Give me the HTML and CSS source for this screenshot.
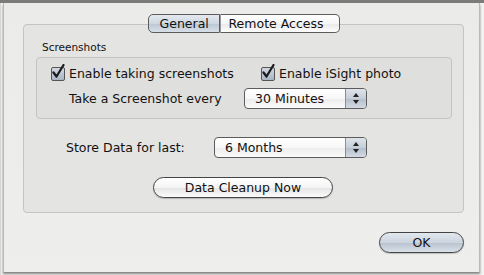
FILE: index.html
```html
<!DOCTYPE html>
<html lang="en">
<head>
  <meta charset="UTF-8">
  <title>Preferences</title>
  <link rel="stylesheet" href="styles.css">
</head>
<body>
<div class="window">
  <div class="sheet">
    <div class="tabs">
      <span class="tab active">General</span>
      <span class="tab">Remote Access</span>
    </div>

    <div class="tab-box">
      <div class="group-title">Screenshots</div>
      <div class="group">
        <div class="row checks">
          <label class="check first">
            <span class="box"><svg width="14" height="16" viewBox="0 0 14 16"><path d="M2.5 8.5 L5.5 12.5 L12.5 1" fill="none" stroke="#1a1a1a" stroke-width="2.2" stroke-linecap="round" stroke-linejoin="round"/></svg></span>
            Enable taking screenshots
          </label>
          <label class="check">
            <span class="box"><svg width="14" height="16" viewBox="0 0 14 16"><path d="M2.5 8.5 L5.5 12.5 L12.5 1" fill="none" stroke="#1a1a1a" stroke-width="2.2" stroke-linecap="round" stroke-linejoin="round"/></svg></span>
            Enable iSight photo
          </label>
        </div>
        <div class="row every">
          <span class="every-label">Take a Screenshot every</span>
          <div class="popup short">
            <span class="popup-value">30 Minutes</span>
            <span class="popup-arrows"><i class="up"></i><i class="down"></i></span>
          </div>
        </div>
      </div>

      <div class="row store">
        <span class="store-label">Store Data for last:</span>
        <div class="popup long">
          <span class="popup-value">6 Months</span>
          <span class="popup-arrows"><i class="up"></i><i class="down"></i></span>
        </div>
      </div>

      <div class="row cleanup">
        <button class="button wide">Data Cleanup Now</button>
      </div>
    </div>

    <div class="footer">
      <button class="button default">OK</button>
    </div>
  </div>
</div>
</body>
</html>
```

FILE: styles.css
```css
:root {
  --sheet-bg: #ececea;
  --box-bg: #e4e4e2;
  --group-bg: #dfdfdd;
  --box-border: #c4c4c2;
  --text-dark: #111111;
  --control-border: #5c5c5c;
}

* {
  box-sizing: border-box;
  margin: 0;
  padding: 0;
}

body {
  width: 484px;
  height: 275px;
  overflow: hidden;
  font-family: 'DejaVu Sans', sans-serif;
  font-size: 12.5px;
  color: var(--text-dark);
  background: #f3f3f1;
}

.window {
  height: 275px;
  border-top: 3px solid #7b7b7b;
  padding: 0 4px 0 3px;
  background: linear-gradient(to right, #d6d6d6 0, #d6d6d6 1px, #f2f2f0 1px);
}

.sheet {
  height: 269px;
  background: linear-gradient(#ebebe9, #eeeeec);
  border-left: 1px solid #b9b9b7;
  border-right: 1px solid #b9b9b7;
  box-shadow: 0 2px 2px rgba(0, 0, 0, 0.45);
  padding: 11px 15px 0 19px;
}

/* tabs */
.tabs {
  display: flex;
  justify-content: center;
  margin: 0 0 -9px 0;
  position: relative;
  z-index: 1;
}

.tab {
  height: 19px;
  line-height: 17px;
  font-size: 12.5px;
  padding: 0 10px;
  border: 1px solid var(--control-border);
  background: linear-gradient(#ffffff, #f6f6f6 50%, #e9e9e9 51%, #fdfdfd);
}

.tab:first-child {
  border-radius: 5px 0 0 5px;
  width: 72px;
  padding: 0 0 0 11px;
}

.tab + .tab {
  border-left: 1px solid #9a9a9a;
  border-radius: 0 5px 5px 0;
  width: 120px;
  padding-left: 8px;
}

.tab.active {
  background: linear-gradient(#e4e9ef, #cfd7e1 50%, #bcc6d3 51%, #d8dfe8);
}

/* main box */
.tab-box {
  height: 189px;
  background: var(--box-bg);
  border: 1px solid var(--box-border);
  border-radius: 4px;
  padding: 15px 11px 0 12px;
}

.group-title {
  font-size: 10.5px;
  padding-left: 6px;
  line-height: 14px;
  margin-bottom: 3px;
}

.group {
  height: 62px;
  background: var(--group-bg);
  border: 1px solid var(--box-border);
  border-radius: 4px;
  padding: 8px 0 0 14px;
}

.row {
  display: flex;
  align-items: center;
}

.check {
  display: flex;
  align-items: center;
  gap: 4px;
  height: 15px;
}

.check.first {
  width: 210px;
}

.box {
  width: 14px;
  height: 14px;
  border: 1px solid #555;
  border-radius: 2px;
  background: linear-gradient(#d3d9e2, #aab5c4);
  overflow: visible;
  display: flex;
  align-items: flex-end;
}

.box svg {
  display: block;
  margin: 0 0 0 -1px;
  flex: none;
}

.every {
  margin-top: 7px;
  padding-left: 18px;
}

.every-label {
  width: 175px;
}

/* popups */
.popup {
  display: flex;
  height: 21px;
  border: 1px solid var(--control-border);
  border-radius: 4px;
  background: linear-gradient(#ffffff, #f7f7f7 50%, #ececec 51%, #fbfbfb);
  overflow: hidden;
}

.popup.short {
  width: 123px;
}

.popup.long {
  width: 153px;
}

.popup-value {
  flex: 1;
  padding-left: 10px;
  line-height: 19px;
  font-size: 12.5px;
}

.popup-arrows {
  width: 21px;
  border-left: 1px solid #8d8d8d;
  background: linear-gradient(#dfe4ea, #c6ced8 50%, #b3becb 51%, #d3dae3);
  display: flex;
  flex-direction: column;
  align-items: center;
  justify-content: center;
  gap: 3px;
}

.popup-arrows i {
  width: 0;
  height: 0;
  border-left: 3px solid transparent;
  border-right: 3px solid transparent;
}

.popup-arrows .up {
  border-bottom: 4px solid #222;
}

.popup-arrows .down {
  border-top: 4px solid #222;
}

.store {
  margin-top: 18px;
  padding-left: 30px;
}

.store-label {
  width: 148px;
}

/* buttons */
.button {
  font-family: inherit;
  font-size: 12.5px;
  color: var(--text-dark);
  height: 21px;
  border: 1px solid #444;
  border-radius: 11px;
  background: linear-gradient(#ffffff, #f4f4f4 50%, #e4e4e4 51%, #fbfbfb);
  box-shadow: 0 1px 1px rgba(0, 0, 0, 0.2);
}

.cleanup {
  margin-top: 19px;
  padding-left: 117px;
}

.button.wide {
  width: 180px;
}

.footer {
  display: flex;
  justify-content: flex-end;
  padding: 19px 0 0 0;
}

.button.default {
  width: 85px;
  background: linear-gradient(#e3e8ee, #ccd4de 50%, #b8c3d0 51%, #d9e0e8);
}
```
